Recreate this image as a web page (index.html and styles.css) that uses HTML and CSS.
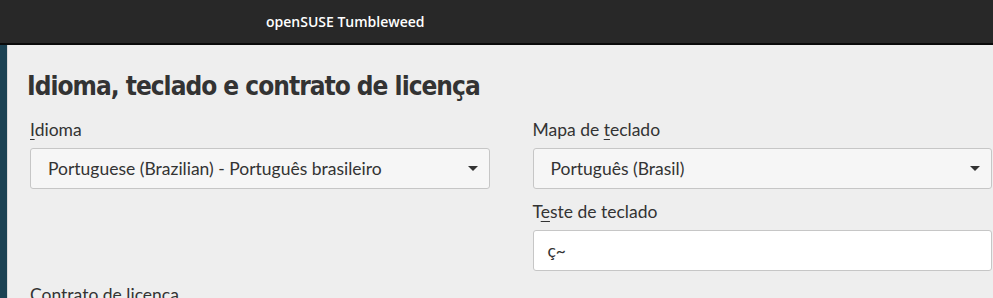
FILE: index.html
```html
<!DOCTYPE html>
<html lang="pt-BR">
<head>
    <meta charset="UTF-8">
    <meta name="viewport" content="width=device-width, initial-scale=1.0">
    <title>openSUSE Tumbleweed</title>
    <link rel="stylesheet" href="styles.css">
</head>
<body>
    <header class="titlebar">
        <span class="titlebar-text">openSUSE Tumbleweed</span>
    </header>
    <div class="window">
        <div class="stripe"></div>
        <main class="content">
            <h1>Idioma, teclado e contrato de licença</h1>
            <div class="fields">
                <div class="column">
                    <label class="field-label"><u>I</u>dioma</label>
                    <div class="combo">
                        <span>Portuguese (Brazilian) - Português brasileiro</span>
                        <span class="arrow"></span>
                    </div>
                </div>
                <div class="column">
                    <label class="field-label">Mapa de <u>t</u>eclado</label>
                    <div class="combo">
                        <span>Português (Brasil)</span>
                        <span class="arrow"></span>
                    </div>
                    <label class="field-label">T<u>e</u>ste de teclado</label>
                    <div class="text-input">ç~</div>
                </div>
            </div>
            <div class="field-label license">Contrato de licença</div>
        </main>
    </div>
</body>
</html>
```

FILE: styles.css
```css
body {
    margin: 0;
    background: #eeeeee;
    font-family: Lato, "Noto Sans", sans-serif;
    color: #333333;
    overflow: hidden;
}
.titlebar {
    height: 43px;
    background-color: #282828;
    border-bottom: 2px solid #0a0a0a;
    display: flex;
    align-items: center;
    padding-left: 266px;
}
.titlebar-text {
    font-family: "Open Sans", sans-serif;
    font-weight: 600;
    font-size: 14px;
    color: #ffffff;
}
.window {
    display: flex;
    height: 253px;
}
.stripe {
    width: 7px;
    background-color: #1b4152;
    border-right: 1px solid #d8d8d8;
}
.content {
    flex: 1;
    padding: 0 1px 0 19px;
}
h1 {
    font-family: "DejaVu Sans Condensed", "Liberation Sans Narrow", sans-serif;
    font-weight: bold;
    font-size: 26px;
    letter-spacing: -1px;
    color: #333333;
    margin: 25px 0 0 0;
    line-height: 32px;
}
.fields {
    display: grid;
    grid-template-columns: 1fr 1fr;
    column-gap: 43px;
    margin-top: 18px;
    padding-left: 3px;
}
.field-label {
    display: block;
    font-size: 17.5px;
    line-height: 20px;
    margin-bottom: 8px;
}
.field-label u {
    text-decoration-thickness: 1px;
    text-underline-offset: 3px;
}
.combo {
    height: 39px;
    border: 1px solid #c6c6c6;
    border-radius: 3px;
    background-color: #f6f6f6;
    display: flex;
    align-items: center;
    justify-content: space-between;
    padding: 0 11px 0 17px;
    font-size: 17.5px;
    margin-bottom: 13px;
}
.arrow {
    width: 0;
    height: 0;
    border-left: 5.5px solid transparent;
    border-right: 5.5px solid transparent;
    border-top: 5px solid #333333;
}
.text-input {
    height: 39px;
    border: 1px solid #c6c6c6;
    border-radius: 3px;
    background-color: #ffffff;
    display: flex;
    align-items: center;
    padding-left: 14px;
    font-size: 17.5px;
}
.license {
    padding-left: 3px;
    margin-top: 14px;
}
```
